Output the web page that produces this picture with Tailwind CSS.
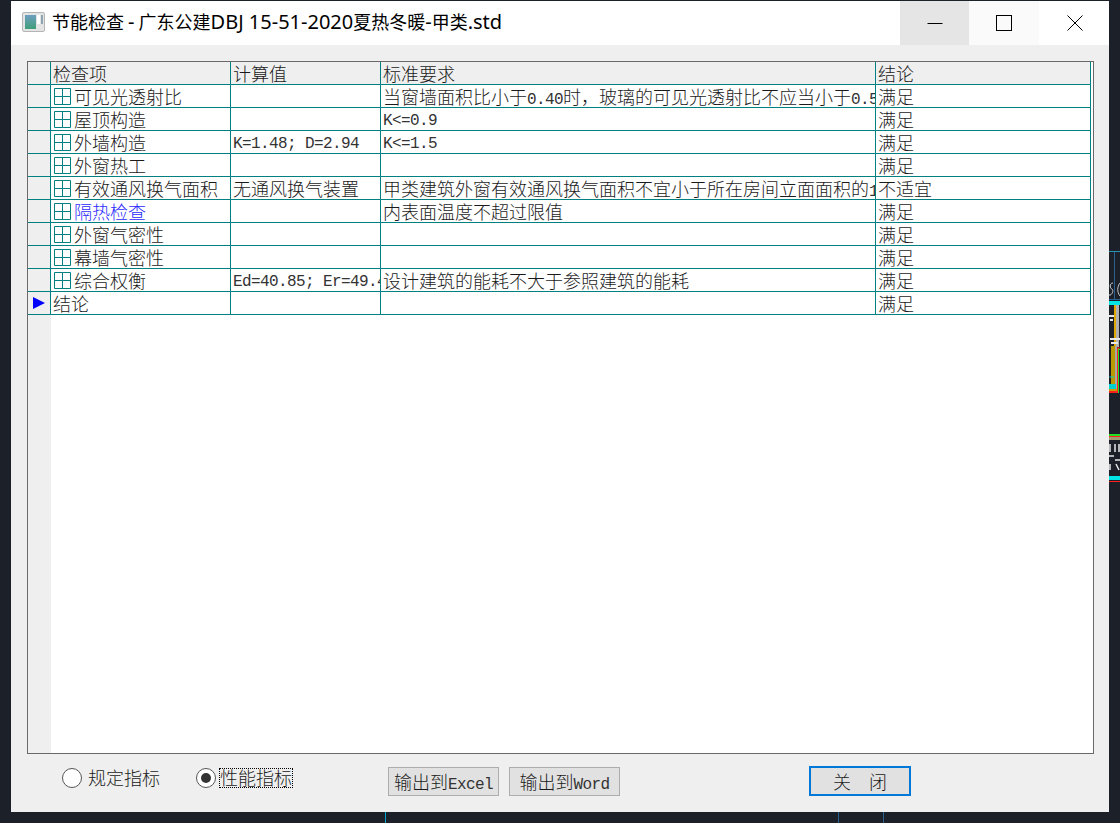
<!DOCTYPE html>
<html lang="en">
<head>
    <meta charset="UTF-8">
    <title>节能检查</title>
    <script src="https://cdn.jsdelivr.net/npm/@tailwindcss/browser@4"></script>
</head>
<body class="relative w-[1120px] h-[823px] overflow-hidden bg-[#1c2129] font-['Noto_Sans_CJK_SC',sans-serif]">
    <!-- bits of the drawing behind the dialog -->
    <svg class="absolute left-0 top-0" width="1120" height="823" fill="none">
        <path d="M1109 251.5H1120" stroke="#2a8fb0"/>
        <path d="M1114.5 252V299" stroke="#2a5f8e"/>
        <path d="M1109 299.5H1120" stroke="#2a5f8e"/>
        <path d="M1113 283C1109 283 1110 289 1112 289C1114 290 1112 296 1109 295M1120 283C1117 287 1117 292 1120 296" stroke="#c8c8c8"/>
        <rect x="1109" y="301" width="11" height="4" fill="#00e5e5"/>
        <rect x="1114" y="305" width="2" height="42" fill="#e0a800"/>
        <rect x="1116" y="305" width="3" height="42" fill="#b0b0b0"/>
        <path d="M1109 316H1114M1110 320H1113M1110 339H1120M1111 343H1118" stroke="#e8e8e8" stroke-width="2"/>
        <rect x="1111" y="346" width="4" height="40" fill="#b89a00"/>
        <rect x="1115" y="346" width="2" height="44" fill="#a8a8a8"/>
        <path d="M1109.5 377H1114" stroke="#00d0d0"/>
        <rect x="1117" y="348" width="1" height="45" fill="#ff2020"/>
        <rect x="1118" y="348" width="1" height="45" fill="#20e020"/>
        <path d="M1117 348H1120" stroke="#ff2020"/>
        <path d="M1118 349.5H1120" stroke="#20e020"/>
        <rect x="1109" y="384" width="7" height="5" fill="#00d0d0"/>
        <rect x="1109" y="389" width="8" height="2" fill="#c8a000"/>
        <rect x="1109" y="391" width="9" height="2" fill="#ff2020"/>
        <rect x="1109" y="434" width="11" height="2" fill="#20e020"/>
        <rect x="1109" y="436" width="11" height="1" fill="#ff2020"/>
        <rect x="1109" y="437" width="11" height="3" fill="#a09a70"/>
        <path d="M1110 444V452M1115 444V452M1119 444V452M1109 456H1114M1115 460H1120M1110 464V470M1116 464L1119 470" stroke="#e8e8e8" stroke-width="1.5"/>
        <rect x="1109" y="476" width="11" height="4" fill="#00e5e5"/>
        <rect x="1109" y="481" width="11" height="1" fill="#ff2020"/>
        <path d="M385.5 812V823" stroke="#00a0d0"/>
        <path d="M838.5 812V823M883.5 812V823" stroke="#2a5f8e"/>
    </svg>

    <div class="relative ml-[11px] mt-[1px] w-[1098px] h-[811px] flex flex-col bg-[#efefef]">
        <!-- title bar -->
        <div class="h-[44px] bg-white flex items-center shrink-0">
            <svg class="ml-[11px] -mt-[2px]" width="23" height="20" viewBox="0 0 23 20">
                <defs>
                    <linearGradient id="panel" x1="0" y1="0" x2="0" y2="1">
                        <stop offset="0" stop-color="#6f9fc0"/>
                        <stop offset="1" stop-color="#3f9f78"/>
                    </linearGradient>
                </defs>
                <rect x="0.5" y="0.5" width="22" height="19" rx="1.5" fill="#e4e4e4" stroke="#b5b5b5"/>
                <rect x="3" y="3" width="11" height="14" fill="url(#panel)"/>
                <rect x="15" y="3" width="3" height="9" fill="#ffffff"/>
                <rect x="19" y="3" width="2" height="9" fill="#8fa5b0"/>
            </svg>
            <span class="ml-[7px] -mt-[2px] text-[18px] leading-none text-black font-['Noto_Sans_CJK_SC',sans-serif] whitespace-nowrap">节能检查 <span class="font-['Noto_Sans'] text-[20px]">-</span> 广东公建<span class="font-['Noto_Sans'] text-[20px]">DBJ 15-51-2020</span>夏热冬暖<span class="font-['Noto_Sans'] text-[20px]">-</span>甲类<span class="font-['Noto_Sans'] text-[20px]">.std</span></span>
            <div class="ml-auto flex h-full">
                <div class="w-[69px] bg-[#e5e5e5] flex items-center justify-center">
                    <svg width="16" height="16" fill="none"><path d="M0.5 8.5H15.5" stroke="#000"/></svg>
                </div>
                <div class="w-[70px] bg-[#fafafa] flex items-center justify-center">
                    <svg width="16" height="16" fill="none"><rect x="0.5" y="0.5" width="15" height="15" stroke="#000"/></svg>
                </div>
                <div class="w-[70px] bg-white flex items-center justify-center pl-[1px]">
                    <svg width="16" height="16" fill="none"><path d="M0.5 0.5L15.5 15.5M15.5 0.5L0.5 15.5" stroke="#000"/></svg>
                </div>
            </div>
        </div>

        <!-- grid -->
        <div class="ml-[16px] mt-[16px] w-[1067px] h-[693px] border border-[#696969] bg-white flex flex-col text-[18px] leading-[22px] font-light text-[#1a1a1a] overflow-hidden relative">
            <div class="absolute left-0 top-0 bottom-0 w-[23px] bg-[#efefef]"></div>

            <div class="relative flex w-[1063px] h-[23px] border-b border-[#008080] bg-[#efefef]">
                <div class="w-[23px] border-r border-[#008080]"></div>
                <div class="w-[180px] border-r border-[#008080] pl-[2px]">检查项</div>
                <div class="w-[150px] border-r border-[#008080] pl-[2px]">计算值</div>
                <div class="w-[495px] border-r border-[#008080] pl-[2px]">标准要求</div>
                <div class="w-[215px] border-r border-[#008080] pl-[2px]">结论</div>
            </div>

            <div class="relative flex w-[1063px] h-[23px] border-b border-[#008080]">
                <div class="w-[23px] border-r border-[#008080]"></div>
                <div class="w-[180px] border-r border-[#008080] flex items-center pl-[3px]"><svg class="mr-[3px]" width="17" height="17" fill="none"><path d="M0.5 0.5H16.5V16.5H0.5ZM8.5 1V16M1 8.5H16" stroke="#008080"/></svg>可见光透射比</div>
                <div class="w-[150px] border-r border-[#008080]"></div>
                <div class="w-[495px] border-r border-[#008080] pl-[2px] overflow-hidden whitespace-nowrap">当窗墙面积比小于<span class="font-['Liberation_Mono'] text-[16px] tracking-[-0.6px] text-[#333]">0.40</span>时，玻璃的可见光透射比不应当小于<span class="font-['Liberation_Mono'] text-[16px] tracking-[-0.6px] text-[#333]">0.5</span></div>
                <div class="w-[215px] border-r border-[#008080] pl-[2px]">满足</div>
            </div>

            <div class="relative flex w-[1063px] h-[23px] border-b border-[#008080]">
                <div class="w-[23px] border-r border-[#008080]"></div>
                <div class="w-[180px] border-r border-[#008080] flex items-center pl-[3px]"><svg class="mr-[3px]" width="17" height="17" fill="none"><path d="M0.5 0.5H16.5V16.5H0.5ZM8.5 1V16M1 8.5H16" stroke="#008080"/></svg>屋顶构造</div>
                <div class="w-[150px] border-r border-[#008080]"></div>
                <div class="w-[495px] border-r border-[#008080] pl-[2px] pt-[2px] font-['Liberation_Mono'] text-[16px] tracking-[-0.6px] text-[#333]">K&lt;=0.9</div>
                <div class="w-[215px] border-r border-[#008080] pl-[2px]">满足</div>
            </div>

            <div class="relative flex w-[1063px] h-[23px] border-b border-[#008080]">
                <div class="w-[23px] border-r border-[#008080]"></div>
                <div class="w-[180px] border-r border-[#008080] flex items-center pl-[3px]"><svg class="mr-[3px]" width="17" height="17" fill="none"><path d="M0.5 0.5H16.5V16.5H0.5ZM8.5 1V16M1 8.5H16" stroke="#008080"/></svg>外墙构造</div>
                <div class="w-[150px] border-r border-[#008080] pl-[2px] pt-[2px] font-['Liberation_Mono'] text-[16px] tracking-[-0.6px] text-[#333] whitespace-pre">K=1.48; D=2.94</div>
                <div class="w-[495px] border-r border-[#008080] pl-[2px] pt-[2px] font-['Liberation_Mono'] text-[16px] tracking-[-0.6px] text-[#333]">K&lt;=1.5</div>
                <div class="w-[215px] border-r border-[#008080] pl-[2px]">满足</div>
            </div>

            <div class="relative flex w-[1063px] h-[23px] border-b border-[#008080]">
                <div class="w-[23px] border-r border-[#008080]"></div>
                <div class="w-[180px] border-r border-[#008080] flex items-center pl-[3px]"><svg class="mr-[3px]" width="17" height="17" fill="none"><path d="M0.5 0.5H16.5V16.5H0.5ZM8.5 1V16M1 8.5H16" stroke="#008080"/></svg>外窗热工</div>
                <div class="w-[150px] border-r border-[#008080]"></div>
                <div class="w-[495px] border-r border-[#008080]"></div>
                <div class="w-[215px] border-r border-[#008080] pl-[2px]">满足</div>
            </div>

            <div class="relative flex w-[1063px] h-[23px] border-b border-[#008080]">
                <div class="w-[23px] border-r border-[#008080]"></div>
                <div class="w-[180px] border-r border-[#008080] flex items-center pl-[3px]"><svg class="mr-[3px]" width="17" height="17" fill="none"><path d="M0.5 0.5H16.5V16.5H0.5ZM8.5 1V16M1 8.5H16" stroke="#008080"/></svg>有效通风换气面积</div>
                <div class="w-[150px] border-r border-[#008080] pl-[2px]">无通风换气装置</div>
                <div class="w-[495px] border-r border-[#008080] pl-[2px] overflow-hidden whitespace-nowrap">甲类建筑外窗有效通风换气面积不宜小于所在房间立面面积的<span class="font-['Liberation_Mono'] text-[16px] tracking-[-0.6px] text-[#333]">10%</span></div>
                <div class="w-[215px] border-r border-[#008080] pl-[2px]">不适宜</div>
            </div>

            <div class="relative flex w-[1063px] h-[23px] border-b border-[#008080]">
                <div class="w-[23px] border-r border-[#008080]"></div>
                <div class="w-[180px] border-r border-[#008080] flex items-center pl-[3px] text-[#2a2aff]"><svg class="mr-[3px]" width="17" height="17" fill="none"><path d="M0.5 0.5H16.5V16.5H0.5ZM8.5 1V16M1 8.5H16" stroke="#008080"/></svg>隔热检查</div>
                <div class="w-[150px] border-r border-[#008080]"></div>
                <div class="w-[495px] border-r border-[#008080] pl-[2px]">内表面温度不超过限值</div>
                <div class="w-[215px] border-r border-[#008080] pl-[2px]">满足</div>
            </div>

            <div class="relative flex w-[1063px] h-[23px] border-b border-[#008080]">
                <div class="w-[23px] border-r border-[#008080]"></div>
                <div class="w-[180px] border-r border-[#008080] flex items-center pl-[3px]"><svg class="mr-[3px]" width="17" height="17" fill="none"><path d="M0.5 0.5H16.5V16.5H0.5ZM8.5 1V16M1 8.5H16" stroke="#008080"/></svg>外窗气密性</div>
                <div class="w-[150px] border-r border-[#008080]"></div>
                <div class="w-[495px] border-r border-[#008080]"></div>
                <div class="w-[215px] border-r border-[#008080] pl-[2px]">满足</div>
            </div>

            <div class="relative flex w-[1063px] h-[23px] border-b border-[#008080]">
                <div class="w-[23px] border-r border-[#008080]"></div>
                <div class="w-[180px] border-r border-[#008080] flex items-center pl-[3px]"><svg class="mr-[3px]" width="17" height="17" fill="none"><path d="M0.5 0.5H16.5V16.5H0.5ZM8.5 1V16M1 8.5H16" stroke="#008080"/></svg>幕墙气密性</div>
                <div class="w-[150px] border-r border-[#008080]"></div>
                <div class="w-[495px] border-r border-[#008080]"></div>
                <div class="w-[215px] border-r border-[#008080] pl-[2px]">满足</div>
            </div>

            <div class="relative flex w-[1063px] h-[23px] border-b border-[#008080]">
                <div class="w-[23px] border-r border-[#008080]"></div>
                <div class="w-[180px] border-r border-[#008080] flex items-center pl-[3px]"><svg class="mr-[3px]" width="17" height="17" fill="none"><path d="M0.5 0.5H16.5V16.5H0.5ZM8.5 1V16M1 8.5H16" stroke="#008080"/></svg>综合权衡</div>
                <div class="w-[150px] border-r border-[#008080] pl-[2px] pt-[2px] font-['Liberation_Mono'] text-[16px] tracking-[-0.6px] text-[#333] whitespace-pre overflow-hidden">Ed=40.85; Er=49.44</div>
                <div class="w-[495px] border-r border-[#008080] pl-[2px]">设计建筑的能耗不大于参照建筑的能耗</div>
                <div class="w-[215px] border-r border-[#008080] pl-[2px]">满足</div>
            </div>

            <div class="relative flex w-[1063px] h-[23px] border-b border-[#008080]">
                <div class="w-[23px] border-r border-[#008080] flex items-center pl-[5px]"><svg width="12" height="12"><path d="M0 0L12 6L0 12Z" fill="#0000ff"/></svg></div>
                <div class="w-[180px] border-r border-[#008080] pl-[2px]">结论</div>
                <div class="w-[150px] border-r border-[#008080]"></div>
                <div class="w-[495px] border-r border-[#008080]"></div>
                <div class="w-[215px] border-r border-[#008080] pl-[2px]">满足</div>
            </div>
        </div>

        <!-- bottom controls -->
        <div class="flex items-center ml-[51px] mt-[12px] h-[30px] text-[18px] font-light text-[#1a1a1a]">
            <div class="flex items-center mb-[7px]">
                <span class="w-[20px] h-[20px] rounded-full border border-[#555] bg-white"></span>
                <span class="ml-[6px]">规定指标</span>
                <span class="ml-[36px] w-[20px] h-[20px] rounded-full border border-[#555] bg-white flex items-center justify-center"><span class="w-[10px] h-[10px] rounded-full bg-[#333]"></span></span>
                <span class="ml-[3px] px-[1px] h-[20px] leading-[19px] outline-1 outline-dotted outline-black -outline-offset-1">性能指标</span>
            </div>
            <button class="ml-[95px] w-[111px] h-[29px] bg-[#e1e1e1] border border-[#adadad] text-[18px] whitespace-nowrap">输出到<span class="font-['Liberation_Mono'] text-[16px] tracking-[-0.6px] text-[#333]">Excel</span></button>
            <button class="ml-[10px] w-[111px] h-[29px] bg-[#e1e1e1] border border-[#adadad] text-[18px] whitespace-nowrap">输出到<span class="font-['Liberation_Mono'] text-[16px] tracking-[-0.6px] text-[#333]">Word</span></button>
            <button class="ml-[189px] w-[102px] h-[30px] bg-[#e1e1e1] border-2 border-[#0078d7] text-[18px] flex items-center justify-center gap-[18px]"><span>关</span><span>闭</span></button>
        </div>
    </div>
</body>
</html>
